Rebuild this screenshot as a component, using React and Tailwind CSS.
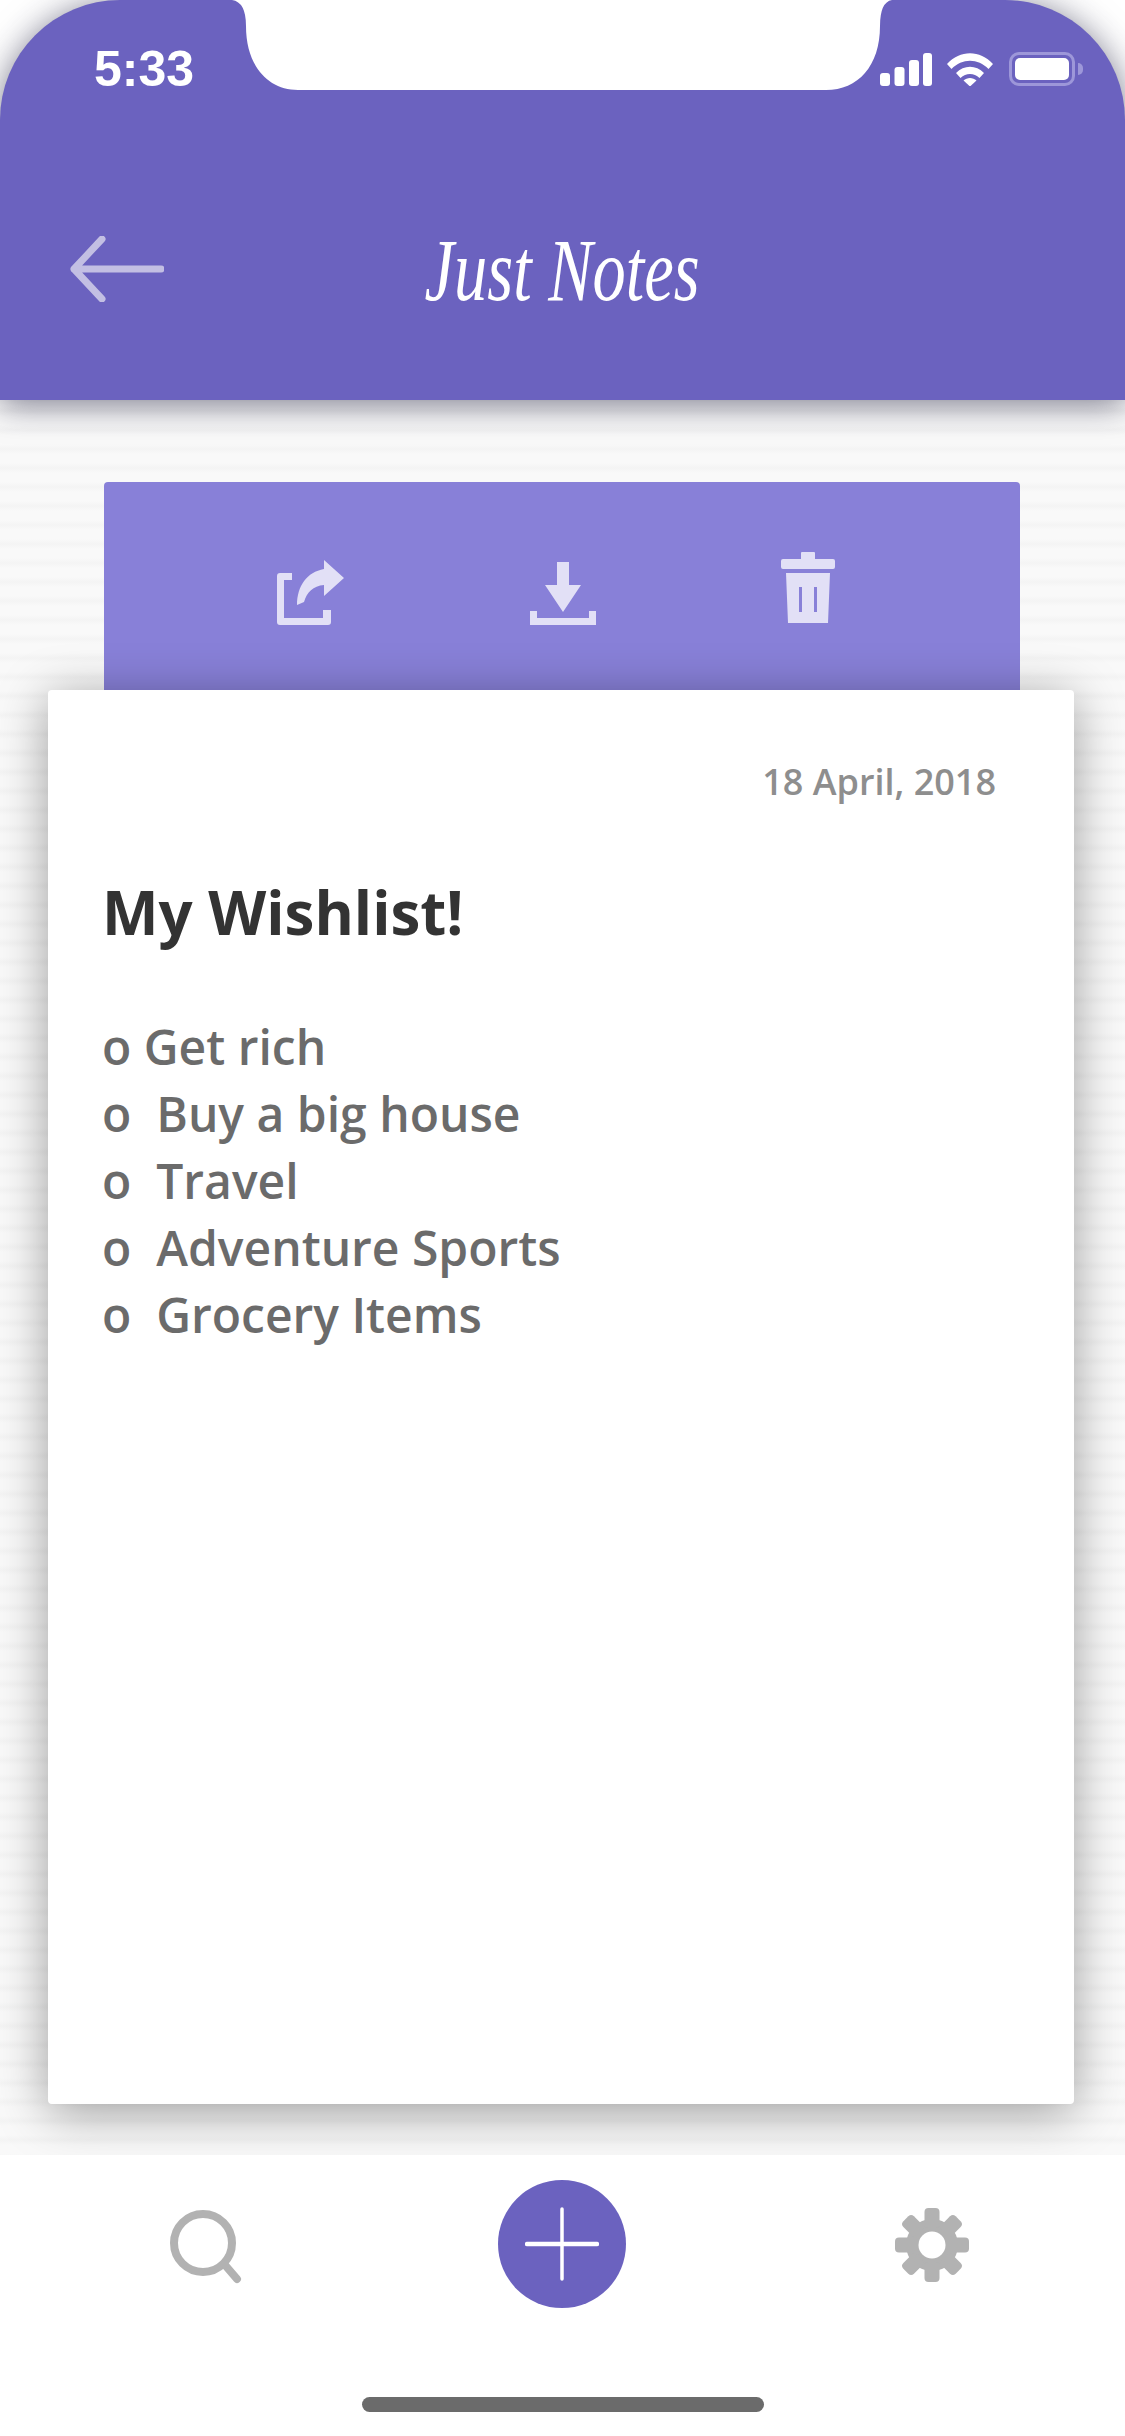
import React from "react";

function StatusIcons() {
  return (
    <div className="flex items-center">
      <svg width="52" height="33" viewBox="0 0 52 33" fill="#fff">
        <rect x="0" y="20" width="10" height="13" rx="3" />
        <rect x="14.5" y="14" width="10" height="19" rx="3" />
        <rect x="29" y="7" width="10" height="26" rx="3" />
        <rect x="43" y="0" width="9" height="33" rx="3" />
      </svg>
      <svg width="46" height="33" viewBox="0 0 46 33" fill="#fff" className="ml-[15px]">
        <path d="M0 11 C13 -3.5 33 -3.5 46 11 L41.5 16 C31 5 15 5 4.500 16 Z" />
        <path d="M9 20 C17 11.500 29 11.500 37 20 L32.500 25 C27 19.500 19 19.500 13.500 25 Z" />
        <path d="M16.500 27.500 C20 24 26 24 29.500 27.500 L23 33.500 Z" />
      </svg>
      <div className="ml-[16px] flex h-[34px] w-[66px] items-center justify-center rounded-[10px] border-[3px] border-[#9d97d9]">
        <div className="h-[22px] w-[54px] rounded-[5px] bg-white" />
      </div>
      <div className="ml-[3px] h-[12px] w-[5px] rounded-r-[5px] bg-[#9d97d9]" />
    </div>
  );
}

function ShareIcon() {
  return (
    <svg width="68" height="66" viewBox="0 0 68 66" fill="#e2e0f6">
      <path d="M3 13 H15 V20 H7 V58 H46 V50 H54 V62 Q54 65 51 65 H3 Q0 65 0 62 V16 Q0 13 3 13 Z" />
      <path d="M47 0 L67 18 L47 36 V25 C36 26 30 32 27 42 L20 45 C20 26 30 12 47 9 Z" />
    </svg>
  );
}

function DownloadIcon() {
  return (
    <svg width="66" height="63" viewBox="0 0 66 63" fill="#e2e0f6">
      <path d="M27 0 H39 V23 H51 L33 50 L15 23 H27 Z" />
      <path d="M0 49 H7 V56 H59 V49 H66 V63 H0 Z" />
    </svg>
  );
}

function TrashIcon() {
  return (
    <svg width="54" height="72" viewBox="0 0 54 72" fill="#e2e0f6">
      <path d="M20 1 Q20 0 21 0 H33 Q34 0 34 1 V7 H52 Q54 7 54 9 V15 Q54 17 52 17 H2 Q0 17 0 15 V9 Q0 7 2 7 H20 Z" />
      <path fillRule="evenodd" d="M5 21 H49 L47 71 H7 Z M18 35 V60 H21 V35 Z M33 35 V60 H36 V35 Z" />
    </svg>
  );
}

function GearIcon() {
  const angles = [0, 45, 90, 135, 180, 225, 270, 315];
  return (
    <svg width="74" height="74" viewBox="-37 -37 74 74" fill="#b2b2b2" className="ml-[269px] translate-y-[1px]">
      <circle r="26" />
      {angles.map((a) => (
        <rect key={a} x="-7.500" y="-37" width="15" height="20" rx="4" transform={`rotate(${a})`} />
      ))}
      <circle r="13.500" fill="#fff" />
    </svg>
  );
}

export default function App() {
  const items = ["o Get rich", "o\u00a0 Buy a big house", "o\u00a0 Travel", "o\u00a0 Adventure Sports", "o\u00a0 Grocery Items"];
  return (
    <div className="relative flex h-[2436px] w-[1125px] flex-col overflow-hidden bg-white font-['Open_Sans',sans-serif]">
      <header className="relative z-20 flex h-[400px] shrink-0 flex-col rounded-t-[120px] bg-[#6b62bf] shadow-[0_4px_34px_rgba(30,30,60,0.6)]">
        <div className="flex h-[200px] items-start justify-between pl-[94px] pr-[42px] pt-[44px]">
          <span className="font-['Liberation_Sans',sans-serif] text-[50px] font-bold leading-[50px] text-white">5:33</span>
          <div className="pt-[8px]">
            <StatusIcons />
          </div>
        </div>
        <div className="relative flex h-[130px] items-center justify-center">
          <svg width="94" height="66" viewBox="0 0 94 66" fill="none" stroke="#c3bfe3" strokeWidth="7" strokeLinecap="round" strokeLinejoin="round" className="absolute left-[70px] top-[36px]">
            <path d="M91 33 H4 M32 3 L4 33 L32 63" />
          </svg>
          <h1 className="origin-center translate-y-[6px] scale-x-[0.755] font-['Liberation_Serif',serif] text-[88px] font-normal italic leading-none text-white">Just Notes</h1>
        </div>
      </header>
      <svg width="1125" height="92" viewBox="0 0 1125 92" fill="#fff" className="absolute left-0 top-0 z-30">
        <path d="M232 0 Q246 2 246 26 C246 66 268 90 298 90 L826 90 C858 90 880 66 880 26 Q880 2 892 0 Z" />
      </svg>

      <main className="relative z-0 flex-1 bg-[#f8f8f8] bg-[repeating-linear-gradient(180deg,#f9f9f9_0px,#f9f9f9_6px,#f4f4f4_11px,#f9f9f9_16px,#f9f9f9_19px)] pt-[82px]">
        <section className="ml-[104px] mr-[105px] h-[208px] rounded-t-[4px] bg-[#8880d8]">
          <div className="relative h-full w-full">
            <div className="absolute left-[173px] top-[78px]"><ShareIcon /></div>
            <div className="absolute left-[426px] top-[80px]"><DownloadIcon /></div>
            <div className="absolute left-[677px] top-[70px]"><TrashIcon /></div>
          </div>
        </section>
        <article className="relative ml-[48px] mr-[51px] h-[1414px] rounded-[4px] bg-white pl-[55px] pr-[78px] pt-[69px] shadow-[0_8px_50px_rgba(0,0,0,0.38)]">
          <p className="text-right text-[36px] font-semibold leading-[46px] text-[#8e8e8e]">18 April, 2018</p>
          <h2 className="-ml-px mt-[67px] text-[60px] font-bold leading-[80px] text-[#333333]">My Wishlist!</h2>
          <ul className="-ml-px mt-[61px] text-[48px] font-semibold leading-[67px] text-[#6b6b6b]">
            {items.map((t) => (
              <li key={t}>{t}</li>
            ))}
          </ul>
        </article>
      </main>

      <nav className="relative z-10 h-[281px] shrink-0 bg-white">
        <div className="flex h-[174px] items-center pl-[170px] pt-[4px]">
          <svg width="72" height="74" viewBox="0 0 72 74" fill="none" stroke="#b2b2b2" strokeLinecap="round" className="translate-y-[3px]">
            <circle cx="33" cy="33" r="29" strokeWidth="8" />
            <path d="M55 55 L67 69" strokeWidth="8" />
          </svg>
          <button className="ml-[256px] flex h-[128px] w-[128px] items-center justify-center rounded-full bg-[#6b62bf]">
            <svg width="74" height="74" viewBox="0 0 74 74" stroke="#fff" strokeLinecap="round">
              <path d="M37 2 V72" strokeWidth="3.500" />
              <path d="M2 37 H72" strokeWidth="4.500" />
            </svg>
          </button>
          <GearIcon />
        </div>
        <div className="mx-auto mt-[68px] h-[15px] w-[402px] rounded-full bg-[#6b6b6b]" />
      </nav>
    </div>
  );
}
